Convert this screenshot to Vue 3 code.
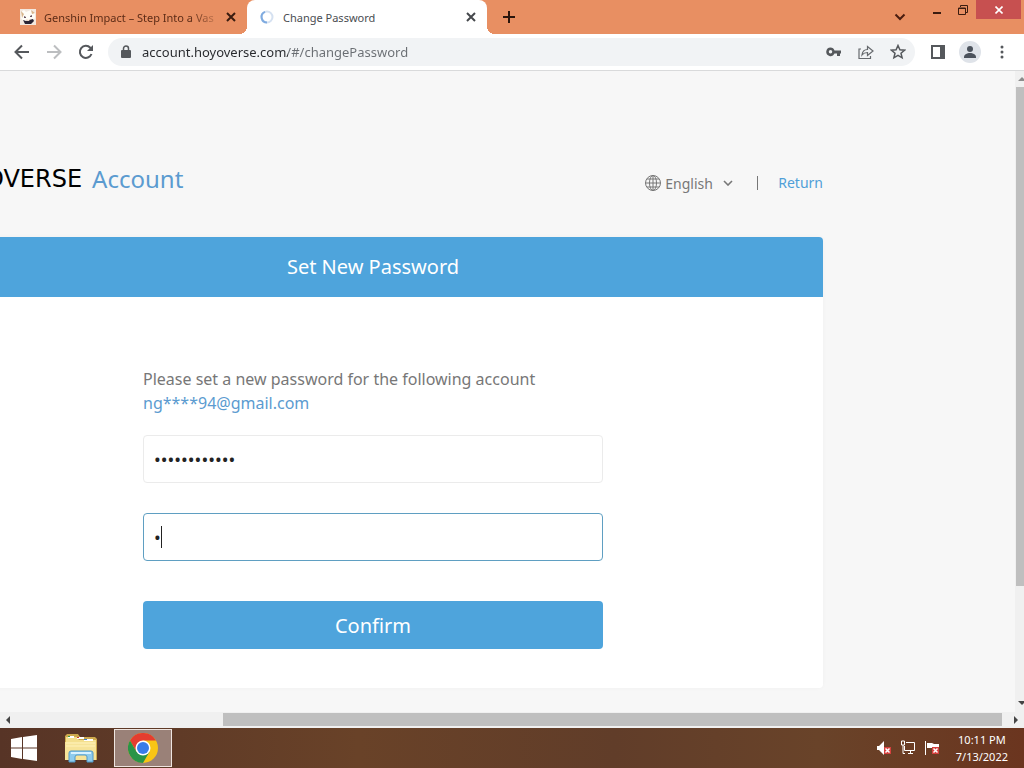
<script setup>
import { ref, reactive } from 'vue';

const url = ref('account.hoyoverse.com/#/changePassword')
const language = ref('English')

const form = reactive({
  email: 'ng****94@gmail.com',
  password: 'abcdefgh1234',
  confirm: 'a'
})

const enviar = () => {
  if (form.password !== form.confirm) {
    return false
  }
  return true
}
</script>

<template>
  <div class="screen">
    <header class="tabs">
      <div class="tab">
        <svg class="favicon" viewBox="0 0 16 16">
          <rect width="16" height="16" fill="#f3e8df" />
          <path d="M1 3l3-2 2 2 5-2 4 3v5l-3 4H4L1 9z" fill="#fffdf8" />
          <path d="M1 2l3 3-2 4zM11 1l4 3-3 1z" fill="#d7b58d" />
          <path d="M4 7l2 1v1H4zM10 7l2-1v2h-2z" fill="#6a5560" />
          <path d="M3 11l3 1 3-1 4-1 1 2-3 3H5z" fill="#292435" />
          <path d="M6 10l3 1 2-2-2 3H7z" fill="#f5dfcc" />
        </svg>
        <span class="tab-title fade">Genshin Impact – Step Into a Vas</span>
        <button class="tab-close" aria-label="Close tab">
          <svg width="10" height="10" viewBox="0 0 10 10"><path d="M1 1l8 8M9 1L1 9" stroke="#3a1c10" stroke-width="2" /></svg>
        </button>
      </div>
      <div class="tab active">
        <svg class="favicon" viewBox="0 0 16 16" fill="none" stroke-width="2">
          <circle cx="8" cy="8" r="5.500" stroke="#d5e1f1" />
          <path d="M8 13.500a5.500 5.500 0 0 1-2-10.600" stroke="#7fabe0" />
        </svg>
        <span class="tab-title">Change Password</span>
        <button class="tab-close" aria-label="Close tab">
          <svg width="10" height="10" viewBox="0 0 10 10"><path d="M1 1l8 8M9 1L1 9" stroke="#45484c" stroke-width="2" /></svg>
        </button>
      </div>
      <button class="new-tab" aria-label="New tab">
        <svg width="12" height="12" viewBox="0 0 12 12"><path d="M6 0v12M0 6h12" stroke="#2b150c" stroke-width="2" /></svg>
      </button>
      <div class="window-buttons">
        <button class="search-tabs" aria-label="Search tabs">
          <svg width="12" height="8" viewBox="0 0 12 8"><path d="M1.500 1.500L6 6l4.500-4.500" fill="none" stroke="#4a1d10" stroke-width="2" /></svg>
        </button>
        <button aria-label="Minimize">
          <svg width="10" height="10" viewBox="0 0 10 10"><path d="M1 8h8" stroke="#3a1c10" stroke-width="2" /></svg>
        </button>
        <button aria-label="Restore">
          <svg width="10" height="10" viewBox="0 0 10 10" fill="none" stroke="#3a1c10"><path d="M.5 3h7v6.500h-7zM0 3.500h8M2.500 2V.5h7v7H8" /></svg>
        </button>
        <button class="window-close" aria-label="Close">
          <svg width="8" height="8" viewBox="0 0 8 8"><path d="M.5.5l7 7M7.500.5l-7 7" stroke="#fff" stroke-width="1.600" /></svg>
        </button>
      </div>
    </header>

    <nav class="toolbar">
      <button aria-label="Back">
        <svg width="16" height="16" viewBox="0 0 16 16" fill="none" stroke="#55585c" stroke-width="2"><path d="M15 8H2M8 1.500L1.500 8 8 14.500" /></svg>
      </button>
      <button aria-label="Forward">
        <svg width="16" height="16" viewBox="0 0 16 16" fill="none" stroke="#bcbec0" stroke-width="2"><path d="M1 8h13M8 1.500L14.500 8 8 14.500" /></svg>
      </button>
      <button aria-label="Reload">
        <svg width="16" height="16" viewBox="0 0 16 16"><path d="M13.500 10A6 6 0 1 1 12.300 3.800L14 5.500" fill="none" stroke="#55585c" stroke-width="2" /><path d="M15 1v6H9z" fill="#55585c" /></svg>
      </button>
      <div class="address">
        <svg width="10" height="14" viewBox="0 0 10 14"><path d="M2.500 6V3.500a2.500 2.500 0 0 1 5 0V6" fill="none" stroke="#55585c" stroke-width="1.500" /><rect y="5" width="10" height="8" rx="1" fill="#55585c" /></svg>
        <input type="text" class="url" aria-label="Address" v-model="url" />
        <button aria-label="Saved passwords">
          <svg width="16" height="10" viewBox="0 0 16 10"><path d="M4.500.5a4.300 4.300 0 1 0 4 6H11v2.500h3V6.500h1v-3H8.500a4.300 4.300 0 0 0-4-3zm0 2.600a1.700 1.700 0 1 1 0 3.500 1.700 1.700 0 0 1 0-3.500z" fill="#55585c" fill-rule="evenodd" /></svg>
        </button>
        <button aria-label="Share">
          <svg width="16" height="16" viewBox="0 0 16 16" fill="none" stroke="#66696d"><path d="M3 5H1v9.500h11.500V12M4 11c.4-4 2.500-5.500 5.500-5.500V2.500L15 7l-5.500 4.500V8.500C7 8.500 5.500 9 4 11z" stroke-width="1.200" /></svg>
        </button>
        <button aria-label="Bookmark this tab">
          <svg width="16" height="16" viewBox="0 0 16 16"><path d="M8 1.500l1.900 4.300 4.600.4-3.500 3 1.100 4.600L8 11.400l-4.100 2.400L5 9.200l-3.500-3 4.600-.4z" fill="none" stroke="#55585c" stroke-width="1.500" /></svg>
        </button>
      </div>
      <button aria-label="Side panel">
        <svg width="14" height="14" viewBox="0 0 14 14"><path d="M0 0h14v14H0zM2 2v10h7V2z" fill="#55585c" fill-rule="evenodd" /></svg>
      </button>
      <button class="profile" aria-label="Profile">
        <svg width="22" height="22" viewBox="0 0 22 22"><circle cx="11" cy="11" r="11" fill="#dfe3e9" /><circle cx="11" cy="8" r="3" fill="#4c535d" /><path d="M5 17v-1c0-2.400 3-4 6-4s6 1.600 6 4v1z" fill="#4c535d" /></svg>
      </button>
      <button aria-label="Menu">
        <svg width="4" height="14" viewBox="0 0 4 14" fill="#55585c"><circle cx="2" cy="2" r="1.500" /><circle cx="2" cy="7" r="1.500" /><circle cx="2" cy="12" r="1.500" /></svg>
      </button>
    </nav>

    <div class="viewport">
      <div class="page">
        <main class="content">
          <div class="head">
            <h1 class="brand"><span class="logo">HOYOVERSE</span> Account</h1>
            <div class="links">
              <label class="lang">
                <svg width="16" height="16" viewBox="0 0 16 16" fill="none" stroke="#777"><circle cx="8" cy="8" r="7.500" /><ellipse cx="8" cy="8" rx="3.500" ry="7.500" /><path d="M8 .5v15M.5 8h15M2 4h12M2 12h12" /></svg>
                <select v-model="language" aria-label="Language">
                  <option>English</option>
                </select>
                <svg width="10" height="6" viewBox="0 0 10 6"><path d="M1 1l4 4 4-4" fill="none" stroke="#777" stroke-width="1.600" /></svg>
              </label>
              <span class="bar"></span>
              <a href="#/">Return</a>
            </div>
          </div>

          <section class="card">
            <h2>Set New Password</h2>
            <form @submit.prevent="enviar">
              <p>Please set a new password for the following account<br /><span class="email">{{ form.email }}</span></p>
              <input type="password" aria-label="New password" v-model="form.password" />
              <div class="field">
                <input type="password" class="focused" aria-label="Confirm password" v-model="form.confirm" />
                <span class="caret"></span>
              </div>
              <button type="submit">Confirm</button>
            </form>
          </section>
        </main>
      </div>
      <div class="vbar">
        <svg width="14" height="16" viewBox="0 0 14 16"><path d="M3 10l4-4 4 4z" fill="#8c8c8c" /></svg>
        <div class="vtrack"><div class="vthumb"></div></div>
        <svg width="14" height="16" viewBox="0 0 14 16"><path d="M3 5h8L7 9z" fill="#444" /></svg>
      </div>
    </div>
    <div class="hbar">
      <svg width="16" height="16" viewBox="0 0 16 16"><path d="M10 4v8L6 8z" fill="#444" /></svg>
      <div class="htrack"><div class="hthumb"></div></div>
      <svg width="22" height="16" viewBox="0 0 22 16"><path d="M12 4v8l4-4z" fill="#444" /></svg>
    </div>

    <footer class="taskbar">
      <button class="task" aria-label="Start">
        <svg width="26" height="26" viewBox="0 0 26 26" fill="#fff"><path d="M0 4l11-2v10.500H0zM12 2l14-2v12.500H12zM0 13.500h11V24L0 22zM12 13.500h14V26l-14-2z" /></svg>
      </button>
      <button class="task" aria-label="File Explorer">
        <svg width="34" height="30" viewBox="0 0 34 30">
          <path d="M1 3l2-2h11l2 3h15l2 2v21H1z" fill="#cda84d" />
          <path d="M2 4h11l2 3h17v20H2z" fill="#f4df8d" />
          <path d="M4 3h6v2H4zM13 4h7v2h-7zM20 6h9v2h-9z" fill="#fff" />
          <path d="M4 3h2v1H4z" fill="#38a04a" /><path d="M13 4h2v1h-2z" fill="#c43e2f" /><path d="M20 6h3v1h-3z" fill="#3a7ec5" />
          <path d="M1 9h31v18H1z" fill="#f6e398" />
          <path d="M2 10h29M2 13h29" stroke="#fff2ba" />
          <path d="M5 29V20q0-2 2-2h20q2 0 2 2v9h-6v-5q0-2-2-2h-8q-2 0-2 2v5z" fill="#8dcbed" stroke="#5199c7" />
          <path d="M7 20h20" stroke="#d7f2ff" stroke-width="2" />
        </svg>
      </button>
      <button class="task running" aria-label="Google Chrome">
        <svg width="30" height="30" viewBox="0 0 30 30">
          <circle cx="15" cy="15" r="15" fill="#f9c515" />
          <path d="M2 7.500A15 15 0 0 1 28 7.500H15L8.500 18.800z" fill="#e43d30" />
          <path d="M2 7.500A15 15 0 0 0 15 30l6.500-11.300h-13z" fill="#299447" />
          <circle cx="15" cy="15" r="7.500" fill="#fff" />
          <circle cx="15" cy="15" r="6" fill="#397ce8" />
        </svg>
      </button>
      <div class="tray">
        <svg width="16" height="16" viewBox="0 0 16 16"><path d="M1 6h2l5-5v14l-5-5H1z" fill="#fff" /><rect x="8" y="7" width="7" height="7" fill="#d5403d" /><path d="M9.500 8.500l4 4M13.500 8.500l-4 4" stroke="#fff" stroke-width="1.500" /></svg>
        <svg width="16" height="16" viewBox="0 0 16 16" fill="none" stroke="#fff"><path d="M6 2.500h8.500v8H4.500V6M8 13.500h5M10.500 11v2M1.500 1v4h3V1zM3 5v8.500h2" /></svg>
        <svg width="16" height="16" viewBox="0 0 16 16"><path d="M1.500 1v14" stroke="#fff" /><path d="M3 3h5l2 1h5v5H9L8 8H3z" fill="#fff" /><rect x="8" y="7" width="7" height="7" fill="#d5403d" /><path d="M9.500 8.500l4 4M13.500 8.500l-4 4" stroke="#fff" stroke-width="1.500" /></svg>
      </div>
      <div class="clock">
        <span>10:11 PM</span>
        <span>7/13/2022</span>
      </div>
    </footer>
  </div>
</template>

<style>
body {
  margin: 0;
  font-family: "Noto Sans", "Open Sans", sans-serif;
}
</style>

<style scoped>
* {
  box-sizing: border-box;
}

svg {
  display: block;
  flex: none;
}

button, input, select {
  margin: 0;
  padding: 0;
  border: none;
  outline: none;
  background: none;
  font-family: inherit;
}

button {
  display: flex;
  align-items: center;
  justify-content: center;
}

.screen {
  display: flex;
  flex-direction: column;
  height: 100vh;
  overflow: hidden;
  background: #f7f7f7;
}

/* tabs */
.tabs {
  display: flex;
  height: 34px;
  flex: none;
  background: #e88f62;
}

.tab {
  display: flex;
  align-items: center;
  width: 240px;
  padding: 0 8px 0 12px;
  font-size: 11px;
  color: #5d2c17;
}

.tab:first-child {
  width: 247px;
  padding-left: 20px;
}

.tab.active {
  position: relative;
  background: #fff;
  color: #4a4d51;
  border-radius: 8px 8px 0 0;
}

.tab.active::before, .tab.active::after {
  content: "";
  position: absolute;
  bottom: 0;
  width: 8px;
  height: 8px;
}

.tab.active::before {
  right: 100%;
  background: radial-gradient(circle at 0 0, transparent 8px, #fff 8px);
}

.tab.active::after {
  left: 100%;
  background: radial-gradient(circle at 100% 0, transparent 8px, #fff 8px);
}

.favicon {
  width: 16px;
  height: 16px;
}

.tab-title {
  flex: 1;
  margin: 0 8px;
  white-space: nowrap;
}

.fade {
  mask-image: linear-gradient(to right, #000 85%, transparent 105%);
}

.tab-close {
  width: 16px;
  height: 16px;
}

.new-tab {
  width: 44px;
}

.window-buttons {
  display: flex;
  align-items: flex-start;
  margin-left: auto;
}

.window-buttons button {
  width: 26px;
  height: 19px;
}

.window-buttons .search-tabs {
  width: 48px;
  height: 34px;
}

.window-buttons .window-close {
  width: 45px;
  margin-right: 3px;
  background: #c75050;
}

/* toolbar */
.toolbar {
  display: flex;
  align-items: center;
  height: 37px;
  flex: none;
  padding: 0 6px;
  background: #fff;
  border-bottom: 1px solid #d9dadb;
}

.toolbar button {
  width: 32px;
  height: 28px;
}

.address {
  display: flex;
  align-items: center;
  flex: 1;
  height: 28px;
  margin: 0 7px 0 6px;
  padding: 0 1px 0 13px;
  border-radius: 14px;
  background: #f1f3f5;
}

.url {
  flex: 1;
  min-width: 0;
  height: 24px;
  margin-left: 11px;
  font-size: 13px;
  color: transparent;
  background: linear-gradient(to right, #27292d 146px, #6a6e73 146px);
  background-clip: text;
}

/* page */
.viewport {
  display: flex;
  flex: 1;
  min-height: 0;
}

.page {
  display: flex;
  justify-content: flex-end;
  flex: 1;
  min-width: 0;
  padding-right: 192px;
  overflow: hidden;
}

.content {
  flex: none;
  width: 900px;
}

.head {
  display: flex;
  align-items: center;
  justify-content: space-between;
  margin: 90px 0 40px;
}

.brand {
  display: flex;
  align-items: center;
  gap: 10px;
  margin: 0;
  padding-left: 13px;
  font-size: 24px;
  line-height: 36px;
  font-weight: 400;
  color: #5b9bd0;
}

.logo {
  font-family: "DejaVu Sans", sans-serif;
  color: #000;
}

.links {
  display: flex;
  align-items: center;
  padding-top: 8px;
  font-size: 14px;
  line-height: 20px;
}

.lang {
  display: flex;
  align-items: center;
  gap: 4px;
}

.lang select {
  appearance: none;
  padding-right: 6px;
  font-size: 14px;
  color: #777;
}

.bar {
  width: 1px;
  height: 14px;
  margin: 0 20px 0 24px;
  background: #777;
}

a {
  color: #4f9fd8;
  text-decoration: none;
}

.card {
  background: #fff;
  border-radius: 4px;
  box-shadow: 0 0 4px rgba(0, 0, 0, 0.03);
}

h2 {
  margin: 0;
  border-radius: 4px 4px 0 0;
  background: #4ea4dc;
  color: #fff;
  font-size: 20px;
  font-weight: 400;
  line-height: 60px;
  text-align: center;
}

form {
  width: 460px;
  margin: 0 auto;
  padding: 70px 0 39px;
}

form p {
  margin: 0 0 20px;
  font-size: 16px;
  line-height: 24px;
  color: #777;
}

.email {
  color: #5b9bd0;
}

form input {
  display: block;
  width: 100%;
  height: 48px;
  padding: 0 10px;
  border: 1px solid #ebebeb;
  border-radius: 4px;
  font-size: 18px;
  color: #222;
}

.field {
  position: relative;
  margin: 30px 0 40px;
}

form .focused {
  border-color: #5f9fc2;
}

.caret {
  position: absolute;
  top: 13px;
  left: 18px;
  width: 1px;
  height: 22px;
  background: #222;
}

form button {
  width: 100%;
  height: 48px;
  border-radius: 4px;
  background: #4ea4dc;
  color: #fff;
  font-size: 20px;
}

/* scrollbars */
.vbar {
  display: flex;
  flex-direction: column;
  width: 9px;
  overflow: hidden;
  background: #f0f0f0;
}

.vtrack {
  flex: 1;
}

.vthumb {
  height: 82%;
  margin-left: 1px;
  background: #bfbfbf;
}

.hbar {
  display: flex;
  height: 16px;
  flex: none;
  background: #f0f0f0;
}

.htrack {
  flex: 1;
  padding: 1px 0 2px;
}

.hthumb {
  width: 79%;
  height: 100%;
  margin-left: auto;
  background: #bfbfbf;
}

/* taskbar */
.taskbar {
  display: flex;
  align-items: center;
  height: 40px;
  flex: none;
  padding-right: 16px;
  background: linear-gradient(to right, #573426, #694228 35%, #613d29 60%, #694329 80%, #6b351f);
}

.task {
  width: 56px;
  height: 38px;
}

.task:first-child {
  width: 48px;
}

.task:nth-child(2) {
  width: 66px;
}

.running {
  width: 58px;
  border: 1px solid #efe5e0;
  background: #9a8178;
}

.tray {
  display: flex;
  gap: 8px;
  margin-left: auto;
}

.clock {
  display: flex;
  flex-direction: column;
  align-items: center;
  margin-left: 16px;
  font-size: 11px;
  line-height: 17px;
  color: #fff;
}
</style>
